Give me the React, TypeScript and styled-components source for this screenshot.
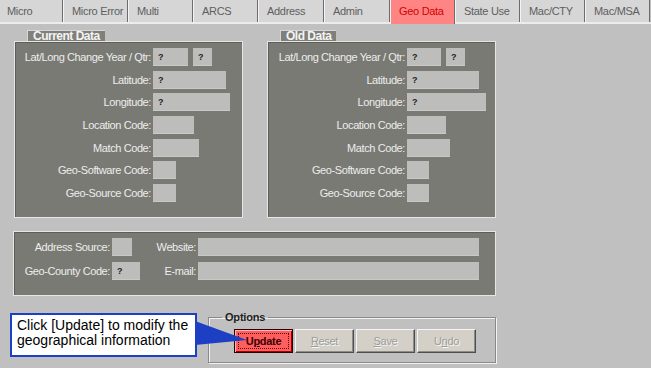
import React from "react";
import styled, { createGlobalStyle } from "styled-components";

const GlobalStyle = createGlobalStyle`
  html, body {
    margin: 0;
    padding: 0;
    background: #c0c0c0;
  }
  * {
    box-sizing: border-box;
  }
`;

const Screen = styled.div`
  width: 651px;
  height: 368px;
  overflow: hidden;
  background: #c0c0c0;
  font-family: "Liberation Sans", Arial, sans-serif;
  display: flex;
  flex-direction: column;
`;

const TabBar = styled.div`
  height: 24px;
  display: flex;
  align-items: flex-start;
  box-shadow: inset 0 -2px 0 #ececec;
`;

const Tab = styled.div<{ $active?: boolean; $first?: boolean; $w: number }>`
  width: ${(p) => p.$w}px;
  height: ${(p) => (p.$active ? 24 : 22)}px;
  padding-left: ${(p) => (p.$first ? 7 : 8)}px;
  line-height: 22px;
  font-size: 11px;
  letter-spacing: -0.3px;
  color: ${(p) => (p.$active ? "#d40000" : "#5e5e5e")};
  background: ${(p) => (p.$active ? "#ff8585" : "#d6d6d6")};
  border-left: ${(p) => (p.$first ? "none" : "1px solid #f4f4f4")};
  border-right: 1px solid #6c6c6c;
  white-space: nowrap;
`;

const Main = styled.div`
  flex: 1;
  padding: 6px 0 0 13px;
  display: flex;
  flex-direction: column;
`;

const TopRow = styled.div`
  display: flex;
  gap: 24px;
  margin-left: 1px;
`;

const Group = styled.section`
  width: 229px;
  display: flex;
  flex-direction: column;
`;

const GroupTitle = styled.div`
  position: relative;
  z-index: 1;
  align-self: flex-start;
  margin-left: 13px;
  height: 11px;
  padding: 0 5px;
  background: #80807b;
  border-top: 1px solid #d6d6d6;
  border-left: 1px solid #d6d6d6;
  color: #f4f4f4;
  font-size: 12px;
  font-weight: bold;
  letter-spacing: -0.5px;
  line-height: 10px;
  white-space: nowrap;
`;

const Panel = styled.div`
  border: 1px solid #e6e6e6;
  background: #7a7a74;
  box-shadow: inset 1px 1px 0 #5e5e59;
`;

const FieldGrid = styled(Panel)<{ $labelW: number }>`
  height: 177px;
  padding-top: 6px;
  display: grid;
  grid-template-columns: ${(p) => p.$labelW}px 1fr;
  grid-auto-rows: 18px;
  column-gap: 2px;
  row-gap: 4.7px;
  align-content: start;
`;

const Label = styled.span`
  justify-self: end;
  align-self: center;
  font-size: 11px;
  letter-spacing: -0.4px;
  color: #ededed;
  white-space: nowrap;
`;

const Inputs = styled.div`
  display: flex;
  gap: 5px;
`;

const Input = styled.div<{ $w: number }>`
  width: ${(p) => p.$w}px;
  height: 18px;
  background: #bdbdbb;
  box-shadow: inset 0 -1px 0 #c9c9c7;
  padding-left: 5px;
  font-size: 9px;
  font-weight: bold;
  line-height: 19px;
  color: #222;
`;

const ContactGrid = styled(Panel)`
  margin-top: 13px;
  width: 483px;
  height: 65px;
  padding: 6px 0 0 0;
  display: grid;
  grid-template-columns: 96px 28px 54px 281px;
  grid-auto-rows: 18px;
  column-gap: 2px;
  row-gap: 6px;
  align-content: start;
`;

const BottomRow = styled.div`
  margin-top: 15px;
  display: flex;
  align-items: flex-start;
  gap: 11px;
  margin-left: -3px;
`;

const Callout = styled.div`
  position: relative;
  margin-top: 2px;
  width: 187px;
  height: 44px;
  border: 2px solid #1c3fc4;
  background: #ffffff;
  padding: 3px 0 0 5px;
  font-size: 14px;
  line-height: 15px;
  color: #000;
  white-space: nowrap;
`;

const Pointer = styled.svg`
  position: absolute;
  left: 183px;
  top: 2px;
  overflow: visible;
`;

const Options = styled.fieldset`
  margin: 0;
  width: 288px;
  height: 52px;
  padding: 6px 0 0 25px;
  border: 1px solid #8a8a8a;
  box-shadow: 1px 1px 0 #f2f2f2, inset 1px 1px 0 #f2f2f2;
  display: flex;
  gap: 2px;
  align-items: flex-start;
`;

const OptionsLegend = styled.legend`
  margin-left: -12px;
  padding: 0 3px;
  font-size: 11px;
  font-weight: bold;
  letter-spacing: -0.2px;
  color: #1e1e1e;
  line-height: 12px;
`;

const Button = styled.div<{ $primary?: boolean }>`
  width: 59px;
  height: 24px;
  display: flex;
  align-items: center;
  justify-content: center;
  font-size: 11px;
  letter-spacing: -0.3px;
  font-weight: ${(p) => (p.$primary ? 600 : 400)};
  background: ${(p) => (p.$primary ? "#ff5e5e" : "#d4d0c8")};
  color: ${(p) => (p.$primary ? "#3a0000" : "#9c9c98")};
  text-shadow: ${(p) => (p.$primary ? "none" : "1px 1px 0 #f6f6f6")};
  border: 1px solid ${(p) => (p.$primary ? "#2a0000" : "#4e4e4e")};
  border-top-color: ${(p) => (p.$primary ? "#2a0000" : "#f4f4f4")};
  border-left-color: ${(p) => (p.$primary ? "#2a0000" : "#f4f4f4")};
  box-shadow: ${(p) =>
    p.$primary
      ? "inset 1px 1px 0 #ffb4b4, inset -1px -1px 0 #a80000"
      : "inset -1px -1px 0 #8c8c88"};
  outline: ${(p) => (p.$primary ? "1px dotted #5a0000" : "none")};
  outline-offset: -5px;
`;

const tabs = [
  { label: "Micro", w: 63 },
  { label: "Micro Error", w: 65 },
  { label: "Multi", w: 65 },
  { label: "ARCS", w: 65 },
  { label: "Address", w: 66 },
  { label: "Admin", w: 66 },
  { label: "Geo Data", w: 65 },
  { label: "State Use", w: 65 },
  { label: "Mac/CTY", w: 65 },
  { label: "Mac/MSA", w: 65 },
];

type Row = { label: string; inputs: { w: number; v?: string }[] };

const currentRows: Row[] = [
  { label: "Lat/Long Change Year / Qtr:", inputs: [{ w: 35, v: "?" }, { w: 19, v: "?" }] },
  { label: "Latitude:", inputs: [{ w: 73, v: "?" }] },
  { label: "Longitude:", inputs: [{ w: 77, v: "?" }] },
  { label: "Location Code:", inputs: [{ w: 41 }] },
  { label: "Match Code:", inputs: [{ w: 46 }] },
  { label: "Geo-Software Code:", inputs: [{ w: 23 }] },
  { label: "Geo-Source Code:", inputs: [{ w: 23 }] },
];

const oldRows: Row[] = [
  { label: "Lat/Long Change Year / Qtr:", inputs: [{ w: 34, v: "?" }, { w: 19, v: "?" }] },
  { label: "Latitude:", inputs: [{ w: 72, v: "?" }] },
  { label: "Longitude:", inputs: [{ w: 79, v: "?" }] },
  { label: "Location Code:", inputs: [{ w: 39 }] },
  { label: "Match Code:", inputs: [{ w: 43 }] },
  { label: "Geo-Software Code:", inputs: [{ w: 22 }] },
  { label: "Geo-Source Code:", inputs: [{ w: 22 }] },
];

const DataGroup = ({ title, rows, labelW }: { title: string; rows: Row[]; labelW: number }) => (
  <Group>
    <GroupTitle>{title}</GroupTitle>
    <FieldGrid $labelW={labelW}>
      {rows.map((r) => (
        <React.Fragment key={r.label}>
          <Label>{r.label}</Label>
          <Inputs>
            {r.inputs.map((i, idx) => (
              <Input key={idx} $w={i.w}>
                {i.v}
              </Input>
            ))}
          </Inputs>
        </React.Fragment>
      ))}
    </FieldGrid>
  </Group>
);

export default function App() {
  return (
    <Screen>
      <GlobalStyle />
      <TabBar>
        {tabs.map((t, i) => (
          <Tab key={t.label} $w={t.w} $first={i === 0} $active={t.label === "Geo Data"}>
            {t.label}
          </Tab>
        ))}
      </TabBar>

      <Main>
        <TopRow>
          <DataGroup title="Current Data" rows={currentRows} labelW={136} />
          <DataGroup title="Old Data" rows={oldRows} labelW={137} />
        </TopRow>

        <ContactGrid>
          <Label>Address Source:</Label>
          <Input $w={20} />
          <Label>Website:</Label>
          <Input $w={281} />
          <Label>Geo-County Code:</Label>
          <Input $w={28}>?</Input>
          <Label>E-mail:</Label>
          <Input $w={281} />
        </ContactGrid>

        <BottomRow>
          <Callout>
            Click [Update] to modify the
            <br />
            geographical information
            <Pointer width="60" height="40">
              <polygon points="0,4 52,23 0,28" fill="#1c3fc4" />
            </Pointer>
          </Callout>

          <Options>
            <OptionsLegend>Options</OptionsLegend>
            <Button $primary>
              U<u>p</u>date
            </Button>
            <Button>
              <u>R</u>eset
            </Button>
            <Button>
              <u>S</u>ave
            </Button>
            <Button>
              U<u>n</u>do
            </Button>
          </Options>
        </BottomRow>
      </Main>
    </Screen>
  );
}
